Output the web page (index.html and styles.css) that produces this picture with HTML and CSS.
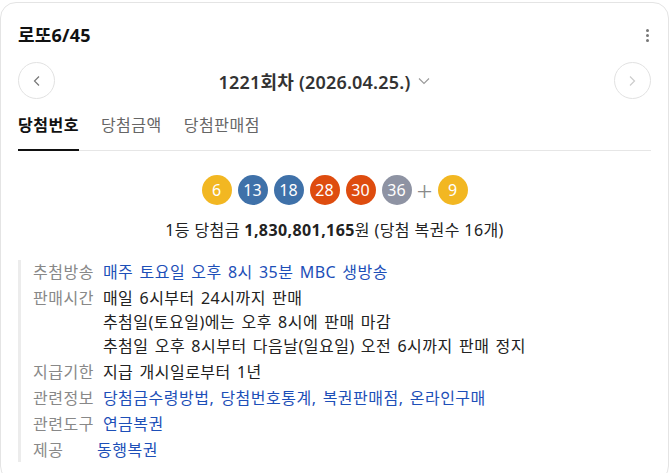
FILE: index.html
```html
<!DOCTYPE html>
<html lang="ko">
<head>
	<meta charset="UTF-8">
	<title>로또6/45</title>
	<link rel="stylesheet" href="styles.css">
</head>
<body>
	<div class="card">
		<div class="head">
			<h2 class="title">로또6/45</h2>
			<span class="more"><i></i><i></i><i></i></span>
		</div>

		<div class="nav">
			<a class="arrow" href="#">
				<svg width="12" height="12" viewBox="0 0 12 12"><path d="M8 1.5 3.5 6 8 10.5" fill="none" stroke="#777" stroke-width="1.2"/></svg>
			</a>
			<div class="round">1221회차 (2026.04.25.)
				<svg width="12" height="8" viewBox="0 0 12 8"><path d="M1 1.5l5 5 5-5" fill="none" stroke="#999" stroke-width="1.1"/></svg>
			</div>
			<a class="arrow off" href="#">
				<svg width="12" height="12" viewBox="0 0 12 12"><path d="M4 1.5 8.5 6 4 10.5" fill="none" stroke="#ccc" stroke-width="1.2"/></svg>
			</a>
		</div>

		<ul class="tabs">
			<li class="on">당첨번호</li>
			<li>당첨금액</li>
			<li>당첨판매점</li>
		</ul>

		<div class="balls">
			<span class="ball y">6</span>
			<span class="ball b">13</span>
			<span class="ball b">18</span>
			<span class="ball r">28</span>
			<span class="ball r">30</span>
			<span class="ball g">36</span>
			<span class="plus">+</span>
			<span class="ball y">9</span>
		</div>
		<p class="prize">1등 당첨금 <b>1,830,801,165</b>원 (당첨 복권수 16개)</p>

		<dl class="info">
			<div class="row"><dt>추첨방송</dt><dd class="link">매주 토요일 오후 8시 35분 MBC 생방송</dd></div>
			<div class="row"><dt>판매시간</dt><dd>매일 6시부터 24시까지 판매<br>추첨일(토요일)에는 오후 8시에 판매 마감<br>추첨일 오후 8시부터 다음날(일요일) 오전 6시까지 판매 정지</dd></div>
			<div class="row"><dt>지급기한</dt><dd>지급 개시일로부터 1년</dd></div>
			<div class="row"><dt>관련정보</dt><dd class="link">당첨금수령방법, 당첨번호통계, 복권판매점, 온라인구매</dd></div>
			<div class="row"><dt>관련도구</dt><dd class="link">연금복권</dd></div>
			<div class="row"><dt class="short">제공</dt><dd class="link">동행복권</dd></div>
		</dl>
	</div>
</body>
</html>
```

FILE: styles.css
```css
*{
	margin: 0;
	padding: 0;
	box-sizing: border-box;
}
body{
	background: #fff;
	font-family: "Noto Sans", "Noto Sans CJK KR", sans-serif;
	color: #222;
}
.card{
	margin: 2px 2px 0 0;
	height: 480px;
	border: 1px solid #e4e4e4;
	border-radius: 16px;
	padding: 0 17px;
}
.head{
	display: flex;
	justify-content: space-between;
	align-items: center;
	padding-top: 19px;
	height: 45px;
}
.title{
	font-size: 18px;
	font-weight: 700;
	line-height: 26px;
	color: #111;
	letter-spacing: 0.2px;
}
.more{
	display: flex;
	flex-direction: column;
	gap: 2px;
	margin-right: 2px;
}
.more i{
	width: 3px;
	height: 3px;
	border-radius: 50%;
	background: #777;
}
.nav{
	display: flex;
	align-items: center;
	justify-content: space-between;
	margin-top: 14px;
}
.arrow{
	display: flex;
	align-items: center;
	justify-content: center;
	width: 37px;
	height: 37px;
	border: 1px solid #e2e2e2;
	border-radius: 50%;
}
.round{
	display: flex;
	align-items: center;
	gap: 8px;
	font-size: 18px;
	font-weight: 600;
	color: #333;
	margin-right: 20px;
	letter-spacing: 0.2px;
}
.tabs{
	list-style: none;
	display: flex;
	gap: 22px;
	margin-top: 15px;
	border-bottom: 1px solid #e6e6e6;
}
.tabs li{
	font-size: 16px;
	letter-spacing: 0.5px;
	line-height: 22px;
	padding-bottom: 13px;
	color: #666;
	margin-bottom: -1px;
	border-bottom: 2px solid transparent;
}
.tabs .on{
	font-weight: 700;
	color: #111;
	border-bottom-color: #111;
}
.balls{
	display: flex;
	justify-content: center;
	align-items: center;
	gap: 6px;
	margin-top: 24px;
}
.ball{
	width: 30px;
	height: 30px;
	border-radius: 50%;
	color: #fff;
	font-size: 16px;
	line-height: 30px;
	text-align: center;
}
.y{ background: #f2b722; }
.b{ background: #3f71a9; }
.r{ background: #de4c0f; }
.g{ background: #8e93a3; }
.plus{
	font-size: 28px;
	line-height: 30px;
	color: #8a8a8a;
	font-weight: 300;
	margin: 0 -1px;
}
.prize{
	text-align: center;
	font-size: 16px;
	letter-spacing: 0.4px;
	line-height: 22px;
	margin-top: 14px;
	color: #222;
}
.prize b{
	font-weight: 700;
}
.info{
	margin-top: 19px;
	border-left: 3px solid #ececec;
	padding-left: 12px;
	font-size: 16px;
	letter-spacing: 0.5px;
	word-spacing: 1.5px;
	line-height: 24px;
}
.row{
	display: flex;
	margin-bottom: 2px;
}
.info dt{
	color: #888;
	margin-right: 9px;
	white-space: nowrap;
}
.info dt.short{
	width: 64px;
	margin-right: 0;
}
.info dd{
	color: #222;
}
.info dd.link{
	color: #1d4fb8;
}
```
